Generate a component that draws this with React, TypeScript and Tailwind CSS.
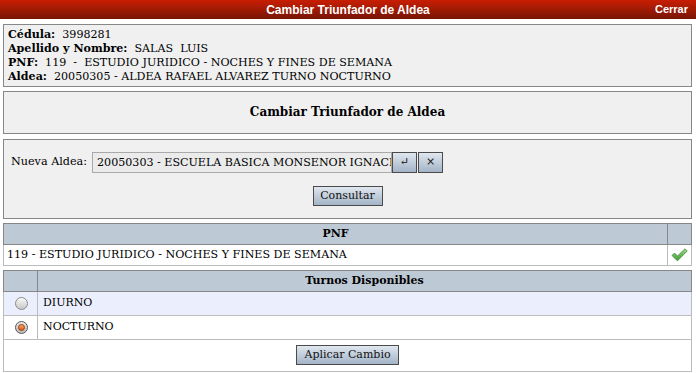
import React from "react";

function CheckIcon() {
  return (
    <svg width="17" height="14" viewBox="0 0 17 14">
      <defs>
        <linearGradient id="chk" x1="0" y1="0" x2="0" y2="1">
          <stop offset="0" stopColor="#9fdc8c" />
          <stop offset="1" stopColor="#3e9a35" />
        </linearGradient>
      </defs>
      <path d="M1 7.5 L3.5 5 L6.5 8 L14 0.8 L16.2 3 L6.5 12.8 Z" fill="url(#chk)" stroke="#3b8a33" strokeWidth="0.8" strokeLinejoin="round" />
    </svg>
  );
}

function Radio({ checked }: { checked?: boolean }) {
  if (checked) {
    return (
      <span className="flex h-[13px] w-[13px] items-center justify-center rounded-full border border-[#5a5a5a] bg-gradient-to-b from-[#e9e9e9] to-[#b9b9b9]">
        <span className="h-[7px] w-[7px] rounded-full border border-[#a2410c] bg-gradient-to-b from-[#f7a46a] to-[#d9581c]" />
      </span>
    );
  }
  return (
    <span className="block h-[13px] w-[13px] rounded-full border border-[#8c8c8c] bg-gradient-to-b from-[#fafafa] to-[#c6c6c6]" />
  );
}

const btn =
  "flex flex-none items-center justify-center border border-[#4b4b4b] bg-gradient-to-b from-[#e0e7ef] to-[#a3b4c7] text-[11px] text-[#111]";

export default function App() {
  return (
    <div className="w-[696px] bg-white pb-[3px] font-['DejaVu_Serif',serif] text-[11px] text-black">
      {/* title bar */}
      <div className="grid h-[19px] grid-cols-[1fr_auto_1fr] items-center bg-gradient-to-b from-[#c91e02] to-[#781504] font-['Liberation_Sans',sans-serif] font-bold text-white">
        <span />
        <span className="text-[12px]">Cambiar Triunfador de Aldea</span>
        <span className="pr-[8px] text-right text-[11px]">Cerrar</span>
      </div>

      <div className="ml-[3px] mr-[4px]">
        {/* datos */}
        <div className="mt-[5px] border border-[#878787] bg-[#f0f0f0] px-[4px] pb-[2px] pt-[3px] text-[11.1px] leading-[14px] whitespace-pre">
          <div><b>Cédula:</b>  3998281</div>
          <div><b>Apellido y Nombre:</b>  SALAS  LUIS</div>
          <div><b>PNF:</b>  119  -  ESTUDIO JURIDICO - NOCHES Y FINES DE SEMANA</div>
          <div><b>Aldea:</b>  20050305 - ALDEA RAFAEL ALVAREZ TURNO NOCTURNO</div>
        </div>

        <div className="mt-[4px] flex h-[43px] items-center justify-center border border-[#878787] bg-[#f0f0f0] pb-[2px] text-[12px] font-bold">
          Cambiar Triunfador de Aldea
        </div>

        <div className="mt-[5px] flex flex-col items-center gap-[13px] border border-[#878787] bg-[#f0f0f0] pb-[12px] pt-[12px]">
          <div className="flex w-full items-center pl-[7px]">
            <span className="mr-[5px] text-[11.2px]">Nueva Aldea:</span>
            <input
              readOnly
              value="20050303 - ESCUELA BASICA MONSENOR IGNACIO"
              className="h-[21px] w-[300px] flex-none border border-[#a9a9a9] bg-[#ebebeb] pl-[4px] font-['DejaVu_Serif',serif] text-[11.1px] text-black outline-none"
            />
            <button className={`${btn} h-[21px] w-[25px]`}>↵</button>
            <button className={`${btn} ml-[1px] h-[21px] w-[25px]`}>×</button>
          </div>
          <button className={`${btn} h-[20px] w-[70px]`}>Consultar</button>
        </div>

        {/* PNF */}
        <table className="mt-[4px] w-full border-collapse">
          <thead>
            <tr className="h-[21px] bg-[#bdcad6]">
              <th className="border border-[#878787] font-bold">PNF</th>
              <th className="w-[24px] border border-[#878787]" />
            </tr>
          </thead>
          <tbody>
            <tr className="h-[21px]">
              <td className="border border-[#bcbcbc] pl-[3px] text-[11.1px]">119 - ESTUDIO JURIDICO - NOCHES Y FINES DE SEMANA</td>
              <td className="border border-[#bcbcbc]">
                <div className="flex justify-center">
                  <CheckIcon />
                </div>
              </td>
            </tr>
          </tbody>
        </table>

        {/* Turnos */}
        <table className="mt-[4px] w-full border-collapse">
          <thead>
            <tr className="h-[21px] bg-[#bdcad6]">
              <th className="w-[34px] border border-[#878787]" />
              <th className="border border-[#878787] font-bold">Turnos Disponibles</th>
            </tr>
          </thead>
          <tbody>
            <tr className="h-[24px] bg-[#ebeffd]">
              <td className="border border-[#bcbcbc]">
                <div className="flex justify-center pl-[2px]"><Radio /></div>
              </td>
              <td className="border border-[#bcbcbc] pl-[5px]">DIURNO</td>
            </tr>
            <tr className="h-[24px]">
              <td className="border border-[#bcbcbc]">
                <div className="flex justify-center pl-[2px]"><Radio checked /></div>
              </td>
              <td className="border border-[#bcbcbc] pl-[5px]">NOCTURNO</td>
            </tr>
            <tr className="h-[31px]">
              <td colSpan={2} className="border border-[#bcbcbc] pb-[6px] pt-[5px]">
                <div className="flex justify-center">
                  <button className={`${btn} h-[20px] w-[103px]`}>Aplicar Cambio</button>
                </div>
              </td>
            </tr>
          </tbody>
        </table>
      </div>
    </div>
  );
}
